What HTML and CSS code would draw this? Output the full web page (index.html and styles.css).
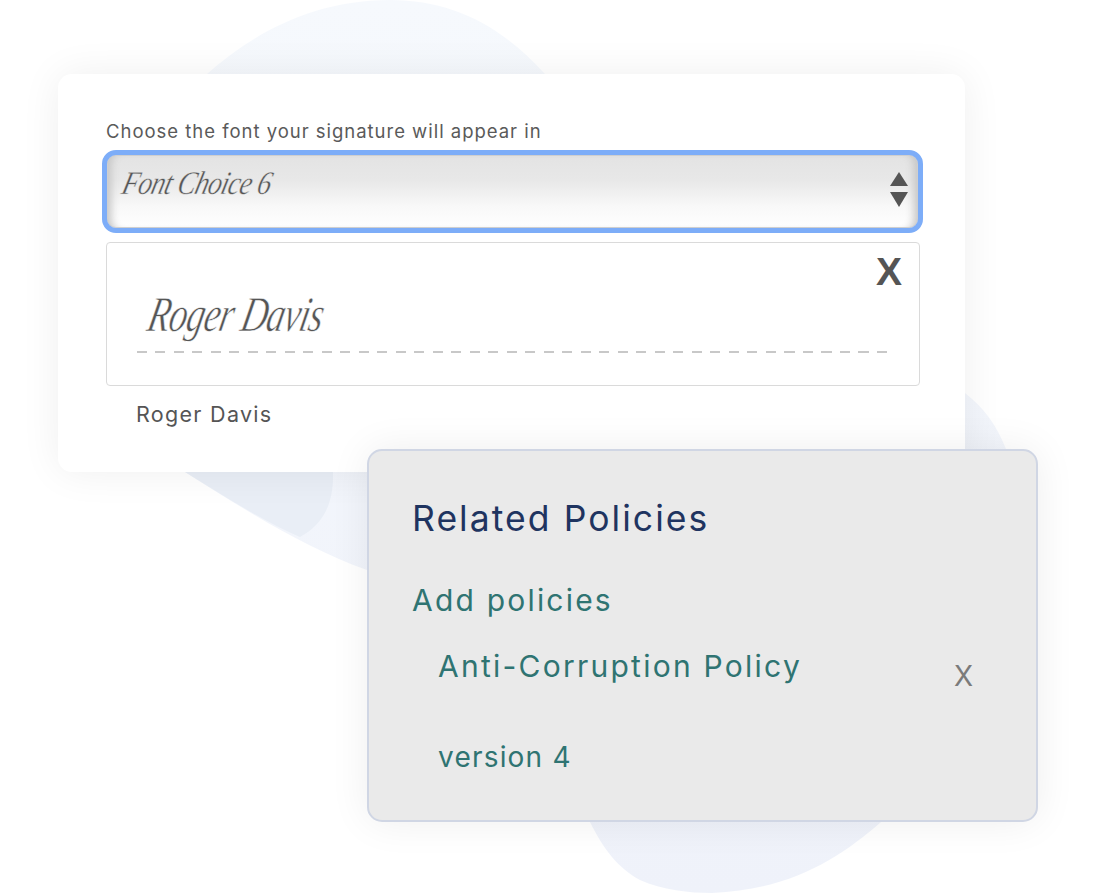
FILE: index.html
```html
<!DOCTYPE html>
<html lang="en">
<head>
    <meta charset="UTF-8">
    <meta name="viewport" content="width=device-width, initial-scale=1.0">
    <title>Signature and Related Policies</title>
    <link rel="stylesheet" href="styles.css">
</head>
<body>
    <div class="stage">
        <!-- backdrop blob -->
        <svg class="blob" width="1100" height="893" viewBox="0 0 1100 893">
            <defs>
                <linearGradient id="blobFill" x1="0" y1="0" x2="0" y2="1">
                    <stop offset="0" stop-color="#f6f9fd"/>
                    <stop offset="1" stop-color="#eff2fa"/>
                </linearGradient>
            </defs>
            <path fill="url(#blobFill)" d="M390 0C310 0 250 36 207 74L120 250L185 472C245 510 305 548 367 570L590 822C604 850 618 868 640 880C662 890 690 893 712 893C790 890 840 858 881 822L1006 449C996 424 984 408 965 393L545 74C500 24 450 0 390 0Z"/>
            <path fill="#e9eef6" d="M185 472C225 497 265 522 300 537C322 525 334 505 333 472Z"/>
        </svg>

        <div class="sign-card">
            <label class="sign-label">Choose the font your signature will appear in</label>
            <div class="font-select">
                <span class="font-name">Font Choice 6</span>
                <svg class="stepper" width="18" height="36" viewBox="0 0 18 36">
                    <path d="M9 0L18 14H0Z"/>
                    <path d="M0 20H18L9 35Z"/>
                </svg>
            </div>
            <div class="sign-box">
                <span class="sign-close">X</span>
                <div class="sign-script">Roger Davis</div>
                <div class="sign-line"></div>
            </div>
            <div class="sign-name">Roger Davis</div>
        </div>

        <div class="policy-card">
            <h2 class="policy-title">Related Policies</h2>
            <div class="policy-add">Add policies</div>
            <div class="policy-row">
                <span class="policy-name">Anti-Corruption Policy</span>
                <span class="policy-close">X</span>
            </div>
            <div class="policy-version">version 4</div>
        </div>
    </div>
</body>
</html>
```

FILE: styles.css
```css
body {
    margin: 0;
    background: #fff;
    overflow: hidden;
    font-family: Inter, "Liberation Sans", sans-serif;
}

.stage {
    position: relative;
    width: 1100px;
    height: 893px;
    overflow: hidden;
    padding-top: 74px;
    box-sizing: border-box;
}

.blob {
    position: absolute;
    top: 0;
    left: 0;
}

.sign-card {
    position: relative;
    box-sizing: border-box;
    width: 907px;
    height: 398px;
    margin-left: 58px;
    padding: 46px 42px 0 45px;
    background: #fff;
    border-radius: 14px;
    box-shadow: 0 0 40px rgba(0, 0, 0, 0.065);
}

.sign-label {
    display: block;
    margin-left: 3px;
    font-size: 18.5px;
    line-height: 22px;
    color: #5a5a5a;
    letter-spacing: 0.98px;
}

.font-select {
    display: flex;
    justify-content: space-between;
    box-sizing: border-box;
    width: 821px;
    height: 83px;
    margin: 8px 0 0 -1px;
    padding: 8px 10px 0 13px;
    border: 5px solid #7dadf8;
    border-radius: 14px;
    background: linear-gradient(#e3e3e3 0%, #e8e8e8 35%, #f8f8f8 70%, #fff 100%);
    box-shadow: inset 0 0 0 1px #cfcfcf, inset 10px 0 8px -6px #c4c4c4, inset -10px 0 8px -6px #c4c4c4;
}

.font-name {
    font-family: "Liberation Serif", serif;
    font-style: italic;
    font-size: 33px;
    line-height: 40px;
    color: #555;
    letter-spacing: -0.8px;
    -webkit-text-stroke: 0.4px #e7e7e7;
    transform: skewX(-14deg) scaleX(0.83);
    transform-origin: left center;
}

.stepper {
    margin-top: 9px;
    fill: #555;
}

.sign-box {
    position: relative;
    box-sizing: border-box;
    width: 814px;
    height: 144px;
    margin: 9px 0 0 3px;
    padding: 38px 31px 0 30px;
    border: 1.5px solid #dadada;
    border-radius: 4px;
}

.sign-close {
    position: absolute;
    top: 8px;
    right: 17px;
    font-family: "Liberation Sans", sans-serif;
    font-weight: 700;
    font-size: 39px;
    line-height: 42px;
    color: #555;
}

.sign-script {
    margin-left: 12px;
    font-family: "Liberation Serif", serif;
    font-style: italic;
    font-size: 50px;
    line-height: 66px;
    color: #555;
    letter-spacing: -0.8px;
    -webkit-text-stroke: 0.6px #fff;
    transform: skewX(-12deg) scaleX(0.72);
    transform-origin: left center;
}

.sign-line {
    width: 750px;
    height: 2px;
    margin-top: 4px;
    background: repeating-linear-gradient(90deg, #c8c8c8 0, #c8c8c8 10px, transparent 10px, transparent 18.5px);
}

.sign-name {
    margin: 15px 0 0 33px;
    font-size: 21.5px;
    line-height: 26px;
    color: #555;
    letter-spacing: 1.3px;
}

.policy-card {
    position: relative;
    box-sizing: border-box;
    width: 671px;
    height: 373px;
    margin: -23px 0 0 367px;
    padding: 46px 44px 0 43px;
    background: #eaeaea;
    border: 2px solid #d0d6e4;
    border-radius: 15px;
    box-shadow: 0 0 40px rgba(0, 0, 0, 0.07);
}

.policy-title {
    margin: 0;
    font-size: 35.5px;
    line-height: 44px;
    font-weight: 400;
    color: #1f3460;
    letter-spacing: 2.05px;
}

.policy-add {
    margin-top: 39px;
    font-size: 30px;
    line-height: 40px;
    color: #2f7472;
    letter-spacing: 2.2px;
}

.policy-row {
    display: flex;
    justify-content: space-between;
    margin: 25px 0 0 26px;
    padding-right: 19px;
}

.policy-name {
    font-size: 30px;
    line-height: 42px;
    color: #2f7472;
    letter-spacing: 2.25px;
}

.policy-close {
    margin-top: 11px;
    font-size: 28px;
    line-height: 40px;
    color: #7b7b7b;
}

.policy-version {
    margin: 41px 0 0 26px;
    font-size: 28px;
    line-height: 40px;
    color: #2f7472;
    letter-spacing: 1.2px;
}
```
